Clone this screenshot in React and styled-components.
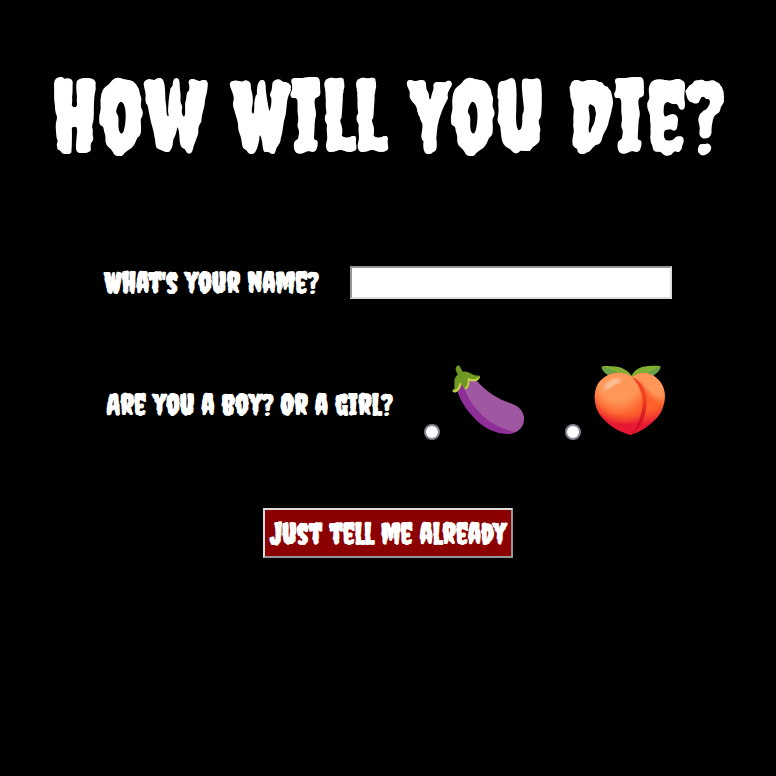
import React from 'react';
import styled, { createGlobalStyle } from 'styled-components';

const GlobalStyle = createGlobalStyle`
  *, *::before, *::after { box-sizing: border-box; }
  body {
    margin: 0;
    min-height: 100vh;
    background: #000;
    color: #fff;
    font-family: Creepster, "Roboto Condensed", "Open Sans", sans-serif;
  }
`;

const Page = styled.main`
  display: flex;
  flex-direction: column;
  align-items: center;
  padding: 56px 8px;
`;

const Title = styled.h1`
  margin: 0 0 88px;
  font-size: 100px;
  font-weight: 400;
  line-height: 120px;
  text-align: center;
  text-shadow: 1px 0 0 #fff;
`;

const Form = styled.form`
  display: flex;
  flex-direction: column;
  align-items: center;
  width: 100%;
`;

const Row = styled.div`
  display: flex;
  align-items: center;
  justify-content: center;
  gap: 32px;
  margin-bottom: 68px;
`;

const Question = styled.label`
  font-size: 30px;
  line-height: 36px;
  text-shadow: 1px 0 0 #fff;
`;

const Group = styled.fieldset`
  margin: 0;
  padding: 0;
  border: 0;
`;

const NameInput = styled.input`
  width: 322px;
  max-width: 100%;
  height: 33px;
  padding: 1px 2px;
  border: 2px solid;
  border-color: #959595 #dcdcdc #dcdcdc #959595;
  border-radius: 0;
  background: #fff;
  font-family: inherit;
  font-size: 24px;
`;

const Choices = styled.div`
  display: flex;
  gap: 36px;
`;

const Choice = styled.label`
  display: flex;
  align-items: flex-end;
  gap: 9px;
`;

const Radio = styled.input`
  appearance: none;
  width: 16px;
  height: 16px;
  margin: 0;
  border: 2px solid #858591;
  border-radius: 50%;
  background: #fff;

  &:checked { background: radial-gradient(#8b0000 40%, #fff 50%); }
`;

const Emoji = styled.span`
  padding-bottom: 6px;
  font-family: "Noto Color Emoji", Creepster, sans-serif;
  font-size: 64px;
  line-height: 66px;
`;

const Submit = styled.button`
  height: 50px;
  padding: 0 5px;
  border: 2px solid;
  border-color: #dcdcdc #959595 #959595 #dcdcdc;
  border-radius: 0;
  background: #8b0000;
  color: #fff;
  font-family: inherit;
  font-size: 30px;
  text-shadow: 1px 0 0 #fff;
  cursor: pointer;
`;

export default function App() {
  return (
    <>
      <GlobalStyle />
      <Page>
        <Title>How Will You Die?</Title>
        <Form onSubmit={(e) => e.preventDefault()}>
          <Row>
            <Question htmlFor="name">What's your name?</Question>
            <NameInput id="name" name="name" type="text" />
          </Row>
          <Group aria-labelledby="gender">
            <Row>
              <Question as="span" id="gender">Are you a boy? Or a girl?</Question>
              <Choices>
                <Choice>
                  <Radio type="radio" name="gender" value="boy" aria-label="Boy" />
                  <Emoji>🍆</Emoji>
                </Choice>
                <Choice>
                  <Radio type="radio" name="gender" value="girl" aria-label="Girl" />
                  <Emoji>🍑</Emoji>
                </Choice>
              </Choices>
            </Row>
          </Group>
          <Submit type="submit">Just tell me already</Submit>
        </Form>
      </Page>
    </>
  );
}
